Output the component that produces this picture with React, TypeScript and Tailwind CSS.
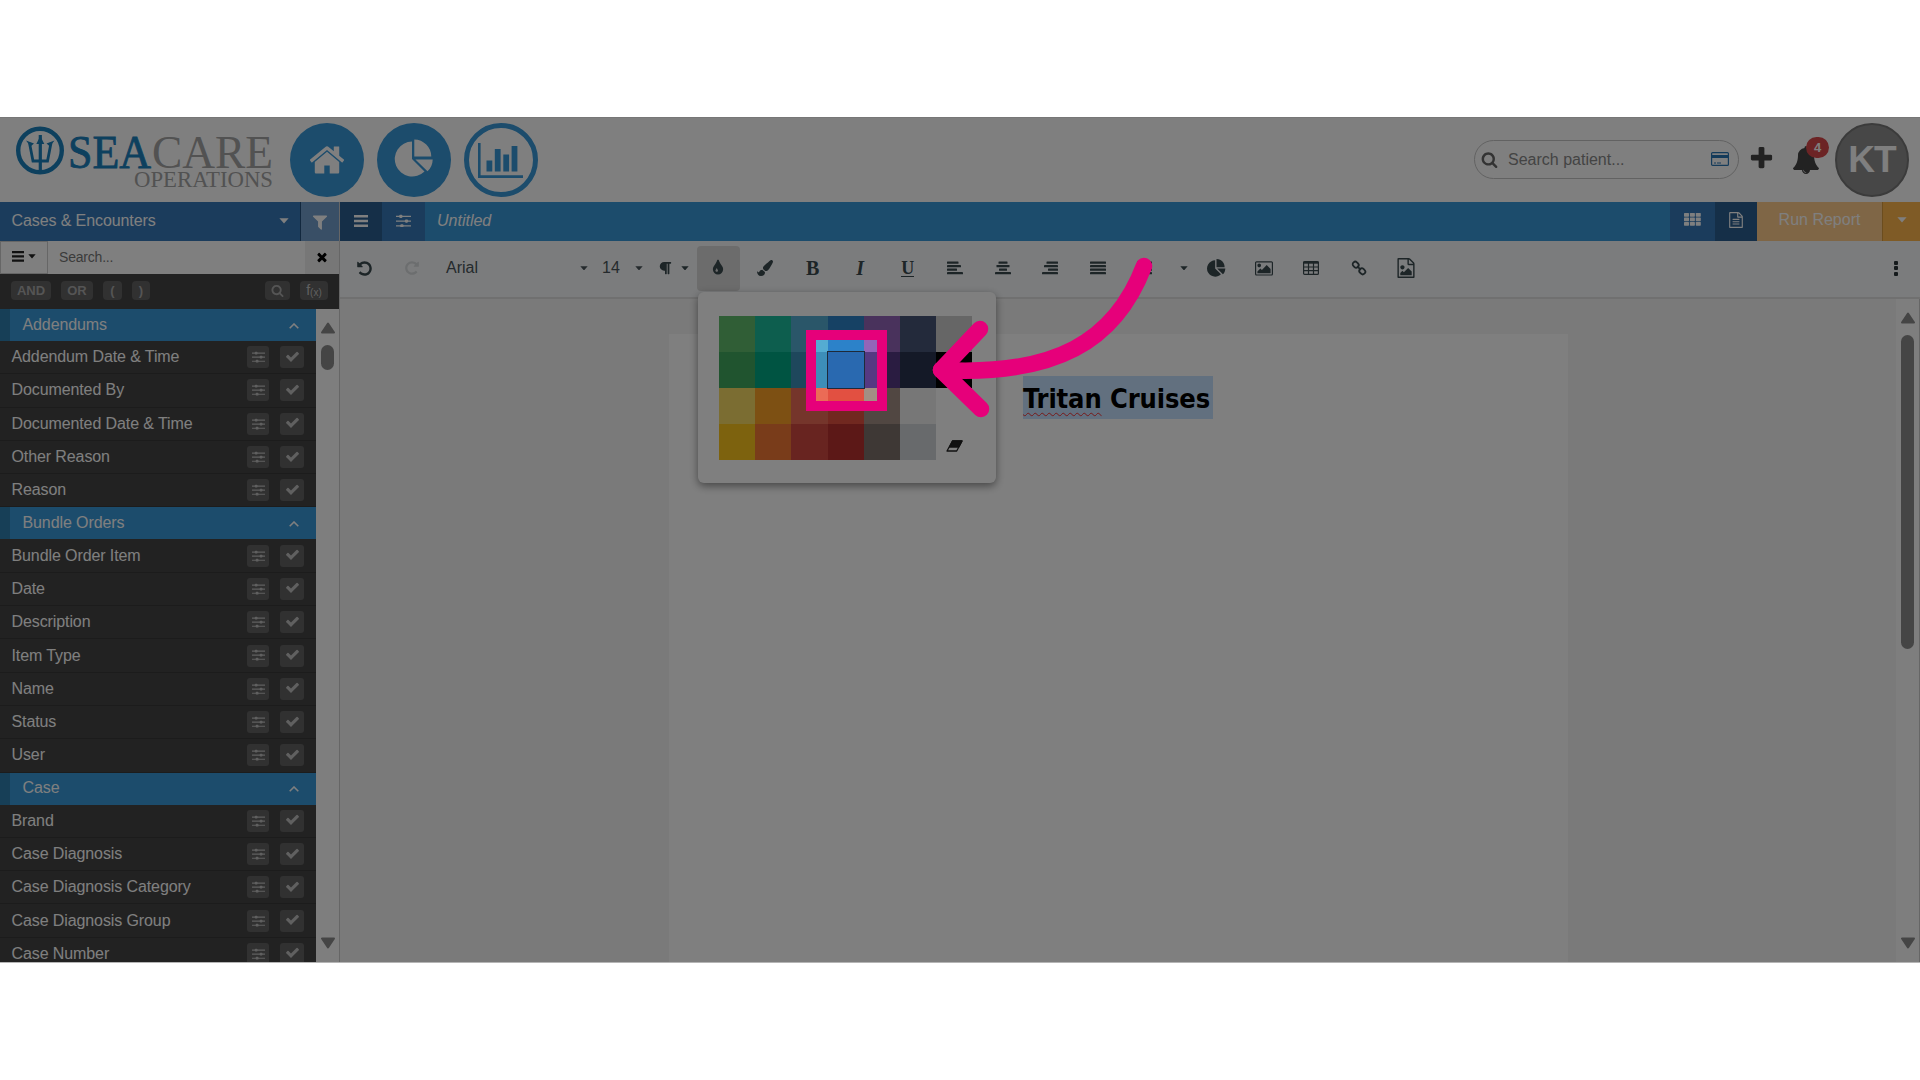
import type { ReactNode } from 'react'
import { FaPaintBrush, FaParagraph } from 'react-icons/fa'

const paths = {
  bell: 'M912 1696q0-16-16-16-59 0-101.500-42.500t-42.500-101.500q0-16-16-16t-16 16q0 73 51.500 124.500t124.500 51.500q16 0 16-16zm816-288q0 52-38 90t-90 38h-448q0 106-75 181t-181 75-181-75-75-181h-448q-52 0-90-38t-38-90q50-42 91-88t85-119.500 74.500-158.500 50-206 19.500-260q0-152 117-282.500t307-158.500q-8-19-8-39 0-40 28-68t68-28 68 28 28 68q0 20-8 39 190 28 307 158.500t117 282.500q0 139 19.500 260t50 206 74.500 158.500 85 119.500 91 88z',
  search: 'M1216 832q0-185-131.500-316.500t-316.500-131.500-316.500 131.500-131.500 316.500 131.500 316.500 316.500 131.500 316.500-131.500 131.500-316.500zm512 832q0 52-38 90t-90 38q-54 0-90-38l-343-342q-179 124-399 124-143 0-273.500-55.500t-225-150-150-225-55.500-273.500 55.500-273.500 150-225 225-150 273.500-55.500 273.500 55.500 225 150 150 225 55.500 273.500q0 220-124 399l343 343q37 37 37 90z',
  plus: 'M1600 736v192q0 40-28 68t-68 28h-416v416q0 40-28 68t-68 28h-192q-40 0-68-28t-28-68v-416h-416q-40 0-68-28t-28-68v-192q0-40 28-68t68-28h416v-416q0-40 28-68t68-28h192q40 0 68 28t28 68v416h416q40 0 68 28t28 68z',
  check: 'M1671 566q0 40-28 68l-724 724-136 136q-28 28-68 28t-68-28l-136-136-362-362q-28-28-28-68t28-68l136-136q28-28 68-28t68 28l294 295 656-657q28-28 68-28t68 28l136 136q28 28 28 68z',
  close: 'M1490 1322q0 40-28 68l-136 136q-28 28-68 28t-68-28l-294-294-294 294q-28 28-68 28t-68-28l-136-136q-28-28-28-68t28-68l294-294-294-294q-28-28-28-68t28-68l136-136q28-28 68-28t68 28l294 294 294-294q28-28 68-28t68 28l136 136q28 28 28 68t-28 68l-294 294 294 294q28 28 28 68z',
  filter: 'M1595 295q17 41-14 70l-493 493v742q0 42-39 59-13 5-25 5-27 0-45-19l-256-256q-19-19-19-45v-486l-493-493q-31-29-14-70 17-39 59-39h1280q42 0 59 39z',
  undo: 'M1664 896q0 156-61 298t-164 245-245 164-298 61q-172 0-327-72.500t-264-204.500q-7-10-6.500-22.500t8.500-20.500l137-138q10-9 25-9 16 2 23 12 73 95 179 147t225 52q104 0 198.500-40.500t163.500-109.500 109.500-163.500 40.500-198.500-40.500-198.500-109.500-163.500-163.500-109.500-198.500-40.500q-98 0-188 35.500t-160 101.500l137 138q31 30 14 69-17 40-59 40h-448q-26 0-45-19t-19-45v-448q0-42 40-59 39-17 69 14l130 129q107-101 244.500-156.500t284.500-55.500q156 0 298 61t245 164 164 245 61 298z',
  tint: 'M896 1152q0-36-20-69-1-1-15.500-22.500t-25.500-38-25-44-21-50.500q-4-16-21-16t-21 16q-7 23-21 50.500t-25 44-25.500 38-15.500 22.500q-20 33-20 69 0 53 37.500 90.500t90.500 37.500 90.500-37.500 37.500-90.500zm512-128q0 212-150 362t-362 150-362-150-150-362q0-145 81-275 6-9 62.500-90.500t101-151 99.500-178 83-201.500q9-30 34-47t51-17 51.500 17 33.500 47q28 93 83 201.500t99.500 178 101 151 62.500 90.500q81 127 81 275z',
  pie: 'M768 890l546 546q-106 108-247.500 168t-298.500 60q-209 0-385.500-103t-279.500-279.500-103-385.500 103-385.500 279.500-279.500 385.500-103v762zm187 6h773q0 157-60 298.500t-168 247.500zm709-128h-768v-768q209 0 385.500 103t279.500 279.500 103 385.500z',
  home: 'M1472 992v480q0 26-19 45t-45 19h-384v-384h-256v384h-384q-26 0-45-19t-19-45v-480q0-1 .5-3t.5-3l575-474 575 474q1 2 1 6zm223-69l-62 74q-8 9-21 11h-3q-13 0-21-7l-692-577-692 577q-12 8-24 7-13-2-21-11l-62-74q-8-10-7-23.500t11-21.500l719-599q32-26 76-26t76 26l244 204v-195q0-14 9-23t23-9h192q14 0 23 9t9 23v408l219 182q10 8 11 21.500t-7 23.500z',
  fileText: 'M1596 380q28 28 48 76t20 88v1152q0 40-28 68t-68 28h-1344q-40 0-68-28t-28-68v-1600q0-40 28-68t68-28h896q40 0 88 20t76 48zm-444-244v376h376q-10-29-22-41l-313-313q-12-12-41-22zm384 1528v-1024h-416q-40 0-68-28t-28-68v-416h-768v1536h1280zm-1024-864q0-14 9-23t23-9h704q14 0 23 9t9 23v64q0 14-9 23t-23 9h-704q-14 0-23-9t-9-23v-64zm736 224q14 0 23 9t9 23v64q0 14-9 23t-23 9h-704q-14 0-23-9t-9-23v-64q0-14 9-23t23-9h704zm0 256q14 0 23 9t9 23v64q0 14-9 23t-23 9h-704q-14 0-23-9t-9-23v-64q0-14 9-23t23-9h704z',
  fileImage: 'M1596 380q28 28 48 76t20 88v1152q0 40-28 68t-68 28h-1344q-40 0-68-28t-28-68v-1600q0-40 28-68t68-28h896q40 0 88 20t76 48zm-444-244v376h376q-10-29-22-41l-313-313q-12-12-41-22zm384 1528v-1024h-416q-40 0-68-28t-28-68v-416h-768v1536h1280zm-128-448v320h-1024v-192l192-192 128 128 384-384zm-832-192q-80 0-136-56t-56-136 56-136 136-56 136 56 56 136-56 136-136 56z',
  picture: 'M576 576q0 80-56 136t-136 56-136-56-56-136 56-136 136-56 136 56 56 136zm1024 384v448h-1408v-192l320-320 160 160 512-512zm96-704h-1600q-13 0-22.500 9.500t-9.500 22.500v1216q0 13 9.500 22.500t22.500 9.500h1600q13 0 22.500-9.500t9.500-22.500v-1216q0-13-9.500-22.500t-22.500-9.500zm160 32v1216q0 66-47 113t-113 47h-1600q-66 0-113-47t-47-113v-1216q0-66 47-113t113-47h1600q66 0 113 47t47 113z',
}

function Icon({ name, className }: { name: keyof typeof paths; className?: string }) {
  return (
    <svg viewBox={name === 'picture' ? '-64 0 1920 1792' : '0 0 1792 1792'} fill="currentColor" className={className}>
      <path d={paths[name]} />
    </svg>
  )
}

function Sliders({ className }: { className?: string }) {
  return (
    <svg viewBox="0 0 14 13" fill="currentColor" className={className}>
      <path d="M0 1.6h14v1.3H0zM0 6h14v1.3H0zM0 10.4h14v1.3H0z" />
      <rect x="3" y="0.8" width="3" height="3" rx="1" />
      <rect x="8.3" y="5.1" width="3" height="3" rx="1" />
      <rect x="4" y="9.5" width="3" height="3" rx="1" />
    </svg>
  )
}

function Bars({ className }: { className?: string }) {
  return (
    <svg viewBox="0 0 14 12" fill="currentColor" className={className}>
      <path d="M0 0h14v2.6H0zM0 4.7h14v2.6H0zM0 9.4h14v2.6H0z" />
    </svg>
  )
}

function Caret({ className = 'w-2' }: { className?: string }) {
  return (
    <svg viewBox="0 0 10 6" fill="currentColor" className={className}>
      <path d="M0.4 0.3h9.2L5 5.6z" />
    </svg>
  )
}

function Triangle({ down = false }: { down?: boolean }) {
  return (
    <svg viewBox="0 0 14 12" className={down ? 'w-3.5 rotate-180' : 'w-3.5'} fill="#8b8b8b" stroke="#8b8b8b" strokeWidth="2" strokeLinejoin="round">
      <path d="M7 1.5L13 10.5H1z" />
    </svg>
  )
}

function Align({ rows }: { rows: number[][] }) {
  return (
    <svg viewBox="0 0 16 14" fill="currentColor" className="h-3.5 w-4">
      {rows.map(([x, w], i) => (
        <rect key={i} x={x} y={i * 3.5 + 0.5} width={w} height="2.3" rx="0.4" />
      ))}
    </svg>
  )
}

function Tool({ children, className = 'w-[47.5px]' }: { children: ReactNode; className?: string }) {
  return <button className={`flex h-[45px] shrink-0 items-center justify-center ${className}`}>{children}</button>
}

const sections = [
  { title: 'Addendums', items: ['Addendum Date & Time', 'Documented By', 'Documented Date & Time', 'Other Reason', 'Reason'] },
  { title: 'Bundle Orders', items: ['Bundle Order Item', 'Date', 'Description', 'Item Type', 'Name', 'Status', 'User'] },
  { title: 'Case', items: ['Brand', 'Case Diagnosis', 'Case Diagnosis Category', 'Case Diagnosis Group', 'Case Number'] },
]

const swatches = [
  'bg-[#61BD6D]', 'bg-[#1ABC9C]', 'bg-[#54ACD2]', 'bg-[#2C82C9]', 'bg-[#9365B8]', 'bg-[#475577]', 'bg-[#CCCCCC]',
  'bg-[#41A85F]', 'bg-[#00A885]', 'bg-[#3D8EB9]', 'bg-[#2969B0]', 'bg-[#553982]', 'bg-[#28324E]', 'bg-[#000000]',
  'bg-[#F7DA64]', 'bg-[#FBA026]', 'bg-[#EB6B56]', 'bg-[#E25041]', 'bg-[#A38F84]', 'bg-[#EFEFEF]', 'bg-[#FFFFFF]',
  'bg-[#FAC51C]', 'bg-[#F37934]', 'bg-[#D14841]', 'bg-[#B8312F]', 'bg-[#7C706B]', 'bg-[#D1D5D8]',
]

function Logo() {
  return (
    <svg viewBox="0 0 260 70" className="h-[70px] w-[260px] overflow-visible">
      <circle cx="24" cy="23.5" r="21.800" fill="none" stroke="#1a80bd" strokeWidth="4.400" />
      <g fill="none" stroke="#1a80bd" strokeWidth="2.800">
        <path d="M24.300 8v38" strokeWidth="3.200" />
        <path d="M13.500 16l3.500 18h14.500l3.500-18" />
      </g>
      <path d="M24.300 9l4 8h-8zM10 13.500l8 3-3.500 3zM38.500 13.500l-8 3 3.500 3z" fill="#1a80bd" />
      <g fontFamily="Liberation Serif, serif">
        <text x="52" y="40.500" fontSize="46" textLength="83" lengthAdjust="spacingAndGlyphs" fill="#1a80bd" stroke="#1a80bd" strokeWidth="0.8">SEA</text>
        <text x="136" y="40.500" fontSize="46" textLength="121" lengthAdjust="spacingAndGlyphs" fill="#a4a4a4">CARE</text>
        <text x="118" y="59.500" fontSize="24" textLength="139" lengthAdjust="spacingAndGlyphs" fill="#a4a4a4">OPERATIONS</text>
      </g>
    </svg>
  )
}

function Header() {
  return (
    <header className="flex h-[85px] shrink-0 items-start border-t border-[#eee] bg-white pt-[5px] pl-4">
      <div className="mt-1"><Logo /></div>
      <div className="ml-[13.500px] flex gap-[13.200px]">
        <div className="flex size-[74px] items-center justify-center rounded-full bg-[#3898d8] text-white">
          <Icon name="home" className="size-[38px]" />
        </div>
        <div className="flex size-[74px] items-center justify-center rounded-full bg-[#3898d8] pb-1 text-white">
          <svg viewBox="0 0 39 38" fill="currentColor" className="w-[39px]">
            <path d="M18 20V2.500A17.500 17.500 0 1 0 30.500 32.500zM20.300 17.600V0.500A17.300 17.300 0 0 1 37.300 17.600zM21.400 20.400H38.700A17 17 0 0 1 33.500 32.300z" />
          </svg>
        </div>
        <div className="flex size-[74px] items-center justify-center rounded-full border-[5px] border-[#3898d8] text-[#3898d8]">
          <svg viewBox="0 0 45 35" fill="currentColor" className="w-[45px]">
            <path d="M0 0h2.600v32.300H45V35H0zM8.500 17.500h5.800V28.500H8.500zM16.800 6h5.800v22.500h-5.800zM25.300 11.500h5.800V28.500h-5.800zM33.600 3h5.800V28.500h-5.800z" />
          </svg>
        </div>
      </div>
      <div className="ml-auto flex pr-[11px]">
        <div className="mt-[17px] flex h-[39px] w-[265px] items-center rounded-full border border-[#c4c4c4] pr-[9px] pl-[6px]">
          <Icon name="search" className="size-[17px] text-[#666]" />
          <span className="ml-2.5 text-[16px] text-[#888]">Search patient...</span>
          <svg viewBox="0 0 18 14" className="mb-0.5 ml-auto w-[18px]">
            <rect x="0.600" y="0.600" width="16.800" height="12.800" rx="1" fill="none" stroke="#2b76b5" strokeWidth="1.200" />
            <path d="M0 3h18v3H0zM3 10.500h2v1H3zM6 10.500h4v1H6z" fill="#2b76b5" />
          </svg>
        </div>
        <Icon name="plus" className="mt-[22px] ml-[9px] size-[27px] text-[#444]" />
        <div className="relative mt-[23px] ml-[17px]">
          <Icon name="bell" className="size-[28px] text-[#444]" />
          <span className="absolute -top-[9px] left-[14px] flex h-[21px] w-[23px] items-center justify-center rounded-full bg-[#d9484a] text-[13px] font-bold text-white">4</span>
        </div>
        <div className="ml-[15px] flex size-[74px] items-center justify-center rounded-full border-2 border-[#777] bg-[#8f8f8f] text-[37px] font-bold tracking-[-1px] text-white">KT</div>
      </div>
    </header>
  )
}

function Sidebar() {
  return (
    <aside className="flex w-[339px] shrink-0 flex-col">
      <div className="flex h-[39px] shrink-0 bg-[#3678b8] text-white">
        <div className="flex flex-1 items-center justify-between border-r border-[#24507c] pr-[11px] pb-0.5 pl-[11.500px]">
          <span className="text-[16px] tracking-[-0.100px]">Cases &amp; Encounters</span>
          <Caret className="w-[10px]" />
        </div>
        <div className="flex w-[38px] items-center justify-center bg-[#729ecc]">
          <Icon name="filter" className="size-[18px]" />
        </div>
      </div>
      <div className="flex h-[33px] shrink-0 bg-white">
        <div className="flex w-[48px] items-center justify-center gap-1 border border-[#ccc] pb-0.5 text-[#222]">
          <Bars className="w-[12.500px]" />
          <Caret />
        </div>
        <div className="flex flex-1 items-center pl-[11px] text-[14px] tracking-[-0.200px] text-[#777]">Search...</div>
        <div className="flex w-[34px] items-center justify-center bg-[#eee] pb-0.5">
          <Icon name="close" className="size-[14px]" />
        </div>
      </div>
      <div className="flex h-[35px] shrink-0 items-center bg-[#444] px-[11px] pb-0.5 text-[13px] font-bold text-[#aaa]">
        <span className="flex h-[19px] w-10 items-center justify-center rounded bg-[#626262]">AND</span>
        <span className="ml-2.5 flex h-[19px] w-8 items-center justify-center rounded bg-[#626262]">OR</span>
        <span className="ml-2.5 flex h-[19px] w-[19px] items-center justify-center rounded bg-[#626262]">(</span>
        <span className="ml-2.5 flex h-[19px] w-[18px] items-center justify-center rounded bg-[#626262]">)</span>
        <span className="ml-auto flex h-[19px] w-[25px] items-center justify-center rounded bg-[#626262]">
          <Icon name="search" className="size-[13px]" />
        </span>
        <span className="ml-2.5 flex h-[19px] w-7 items-center justify-center rounded bg-[#626262] text-[14px] font-normal text-[#c0c0c0]">
          f<sub className="text-[10px]">(x)</sub>
        </span>
      </div>
      <div className="flex min-h-0 flex-1">
        <div className="w-[316px] overflow-hidden bg-[#444]">
          {sections.map(section => (
            <div key={section.title}>
              <div className="flex h-8 items-center border-l-[10px] border-[#2f7eae] bg-[#3898d8] pr-[17px] pb-px pl-[12.500px] text-white">
                <span className="flex-1 text-[16px] tracking-[-0.100px]">{section.title}</span>
                <svg viewBox="0 0 10 6" className="mt-0.5 w-[10px]" fill="none" stroke="currentColor" strokeWidth="1.600"><path d="M0.700 5.200L5 1l4.300 4.200" /></svg>
              </div>
              {section.items.map(item => (
                <div key={item} className="flex h-[33.300px] items-center border-b border-[#383838] pr-3 pl-[11.500px] text-white">
                  <span className="flex-1 text-[16px] tracking-[-0.100px]">{item}</span>
                  <span className="flex h-[22px] w-[22px] items-center justify-center rounded-[3px] bg-[#626262] text-[#c0c0c0]"><Sliders className="w-[13px]" /></span>
                  <span className="ml-[11px] flex h-[22px] w-6 items-center justify-center rounded-[3px] bg-[#626262] pb-0.5 text-[#c0c0c0]"><Icon name="check" className="size-[15px]" /></span>
                </div>
              ))}
            </div>
          ))}
        </div>
        <div className="flex flex-1 flex-col items-center bg-[#fcfcfc] py-[13px]">
          <Triangle />
          <div className="mt-[11px] h-[25px] w-[13px] rounded-full bg-[#8b8b8b]" />
          <div className="mt-auto flex"><Triangle down /></div>
        </div>
      </div>
    </aside>
  )
}

function Toolbar() {
  return (
    <div className="flex h-[58px] shrink-0 items-center border-b-2 border-[#e0e0e0] bg-[#f7f9fb] pb-0.5 text-[#3a4a4f]">
      <Tool className="ml-px w-[47px]"><Icon name="undo" className="size-[17px]" /></Tool>
      <Tool className="w-[47px]"><Icon name="undo" className="size-[16px] -scale-x-100 text-[#d9dcde]" /></Tool>
      <div className="flex w-[153px] items-center justify-between pl-[11px] text-[16px] text-[#4a555a]">Arial<Caret /></div>
      <div className="flex w-[55px] items-center justify-between pl-[14px] text-[16px] text-[#4a555a]">14<Caret /></div>
      <div className="flex w-[46px] items-center justify-between pl-[15px]"><FaParagraph className="size-[14px]" /><Caret /></div>
      <Tool className="ml-[7.500px] w-[43px] rounded-[4px] bg-[#d8d8d8]"><Icon name="tint" className="size-[18px]" /></Tool>
      <Tool className="ml-[2px] w-[47.500px]"><FaPaintBrush className="size-[16px]" /></Tool>
      <Tool><span className="font-['Liberation_Serif',serif] text-[20px] font-bold">B</span></Tool>
      <Tool><span className="font-['Liberation_Serif',serif] text-[20px] font-bold italic">I</span></Tool>
      <Tool><span className="border-b-[1.500px] border-current font-['Liberation_Serif',serif] text-[18px] leading-[16px] font-bold">U</span></Tool>
      <Tool><Align rows={[[0, 11.500], [0, 14], [0, 10], [0, 16]]} /></Tool>
      <Tool><Align rows={[[3.500, 9], [1.500, 13], [4, 8], [0, 16]]} /></Tool>
      <Tool><Align rows={[[4.500, 11.500], [2, 14], [6, 10], [0, 16]]} /></Tool>
      <Tool><Align rows={[[0, 16], [0, 16], [0, 16], [0, 16]]} /></Tool>
      <Tool className="w-[46px]"><Align rows={[[0, 15], [0, 15], [0, 15], [0, 15]]} /></Tool>
      <Tool className="w-[33px]"><Caret /></Tool>
      <Tool className="ml-[2px] w-[28px]"><Icon name="pie" className="size-[19px]" /></Tool>
      <Tool className="ml-[9.500px] w-[47.400px]"><Icon name="picture" className="w-[18px]" /></Tool>
      <Tool>
        <svg viewBox="0 0 16 14" className="w-4" fill="none" stroke="currentColor" strokeWidth="1.200">
          <rect x="0.600" y="0.600" width="14.800" height="12.800" rx="1" />
          <path d="M0 1.700h16" strokeWidth="2" />
          <path d="M0 6h16M0 9.700h16M5.500 2v11M10.500 2v11" />
        </svg>
      </Tool>
      <Tool>
        <svg viewBox="0 0 16 16" className="w-4" fill="none" stroke="currentColor" strokeWidth="1.800">
          <rect x="1.600" y="2.200" width="6.200" height="5" rx="2.300" transform="rotate(45 4.700 4.700)" />
          <rect x="8.200" y="8.800" width="6.200" height="5" rx="2.300" transform="rotate(45 11.300 11.300)" />
          <path d="M6.200 6.200l3.600 3.600" />
        </svg>
      </Tool>
      <Tool><Icon name="fileImage" className="size-[20px]" /></Tool>
      <div className="mr-[22px] ml-auto flex flex-col gap-[1.500px]">
        <i className="size-[4px] rounded-[1px] bg-[#2a3438]" />
        <i className="size-[4px] rounded-[1px] bg-[#2a3438]" />
        <i className="size-[4px] rounded-[1px] bg-[#2a3438]" />
      </div>
    </div>
  )
}

function ReportBar() {
  return (
    <div className="flex h-[39px] shrink-0 bg-[#3898d8] text-white">
      <div className="flex w-[42px] items-center justify-center bg-[#2a5e90] pb-0.5"><Bars className="w-[14px]" /></div>
      <div className="flex w-[43px] items-center justify-center bg-[#3678b8] pb-0.5"><Sliders className="w-[15px]" /></div>
      <span className="pt-[7px] pl-[12px] text-[16px] italic">Untitled</span>
      <div className="ml-auto flex w-[45px] items-center justify-center bg-[#3678b8]">
        <svg viewBox="0 0 17 13" className="mb-1 w-[17px]" fill="currentColor">
          {[0, 4.5, 9].map(y => [0, 5.9, 11.8].map(x => <rect key={`${x}-${y}`} x={x} y={y} width="5" height="3.700" rx="0.600" />))}
        </svg>
      </div>
      <div className="flex w-[42px] items-center justify-center bg-[#2a5e90] pb-1"><Icon name="fileText" className="size-[16px]" /></div>
      <div className="flex w-[125px] items-center justify-center bg-[#fecc8c] pb-[3px] text-[16px] text-white">Run Report</div>
      <div className="flex w-[38px] items-center justify-center border-l border-[#d89a3c] bg-[#feb64c] pb-1"><Caret className="w-[10px]" /></div>
    </div>
  )
}

function ColorPopup() {
  return (
    <div className="absolute top-[175px] left-[697.500px] h-[191px] w-[298.500px] rounded-[6px] bg-white pt-[23.500px] pl-[21.500px] shadow-[0_3px_8px_rgba(0,0,0,0.45)]">
      <div className="grid w-[253.400px] grid-cols-7">
        {swatches.map(color => (
          <div key={color} className={`h-[36.200px] ${color} ${color === 'bg-[#2969B0]' ? 'z-10 outline-1 outline-[#1e2a3a]' : ''}`} />
        ))}
        <div className="flex h-[36.200px] items-center justify-center">
          <svg viewBox="0 0 17 12" className="mt-2 ml-px w-[17px]" stroke="#222" strokeWidth="1.300" strokeLinejoin="round">
            <path d="M6.500 1h9.500L10.700 11H1z" fill="#fff" />
            <path d="M6.500 1h9.500L12.800 7H3.500z" fill="#222" />
          </svg>
        </div>
      </div>
    </div>
  )
}

export default function App() {
  return (
    <div className="h-[1080px] w-[1920px] overflow-hidden bg-white pt-[117px] font-['Liberation_Sans',Arial,sans-serif]">
      <div className="relative flex h-[845px] flex-col overflow-hidden">
        <Header />
        <div className="flex min-h-0 flex-1">
          <Sidebar />
          <main className="flex min-w-0 flex-1 flex-col border-l border-[#ccc]">
            <ReportBar />
            <Toolbar />
            <div className="flex min-h-0 flex-1 bg-[#f5f5f5] pt-[35px] pl-[328.500px]">
              <div className="w-[899px] bg-white pt-[42px] pl-[354.500px]">
                <div className="relative flex h-[43px] w-[189.500px] items-center bg-[#c5e0ff] pt-[3px]">
                  <span className="font-['DejaVu_Sans_Condensed','DejaVu_Sans',sans-serif] text-[27px] font-bold tracking-[-0.100px] whitespace-nowrap text-black">
                    <span className="underline decoration-[#e33] decoration-wavy decoration-1 underline-offset-4">Tritan</span> Cruises
                  </span>
                </div>
              </div>
              <div className="-mt-[35px] ml-auto flex w-6 flex-col items-center border-r border-[#ccc] bg-[#fcfcfc] py-[13px]">
                <Triangle />
                <div className="mt-[11px] h-[314px] w-[13px] rounded-full bg-[#8b8b8b]" />
                <div className="mt-auto flex"><Triangle down /></div>
              </div>
            </div>
          </main>
        </div>
        <ColorPopup />
        {/* dimmed backdrop with a cut-out around the chosen swatch */}
        <div className="absolute top-[212.500px] left-[806px] size-[81px] border-[10px] border-[#e6007a] shadow-[0_0_0_2000px_rgba(0,0,0,0.5)]" />
        <svg viewBox="0 0 1920 846" className="absolute inset-0 h-[846px] w-[1920px]" fill="none" stroke="#e6007a" strokeWidth="16.500" strokeLinecap="round" strokeLinejoin="round">
          <path d="M1144 149C1115 225 1055 259 941 253" />
          <path d="M980 212L941 253L981 292" />
        </svg>
      </div>
      <div className="h-px bg-[#b5b5b5]" />
    </div>
  )
}
